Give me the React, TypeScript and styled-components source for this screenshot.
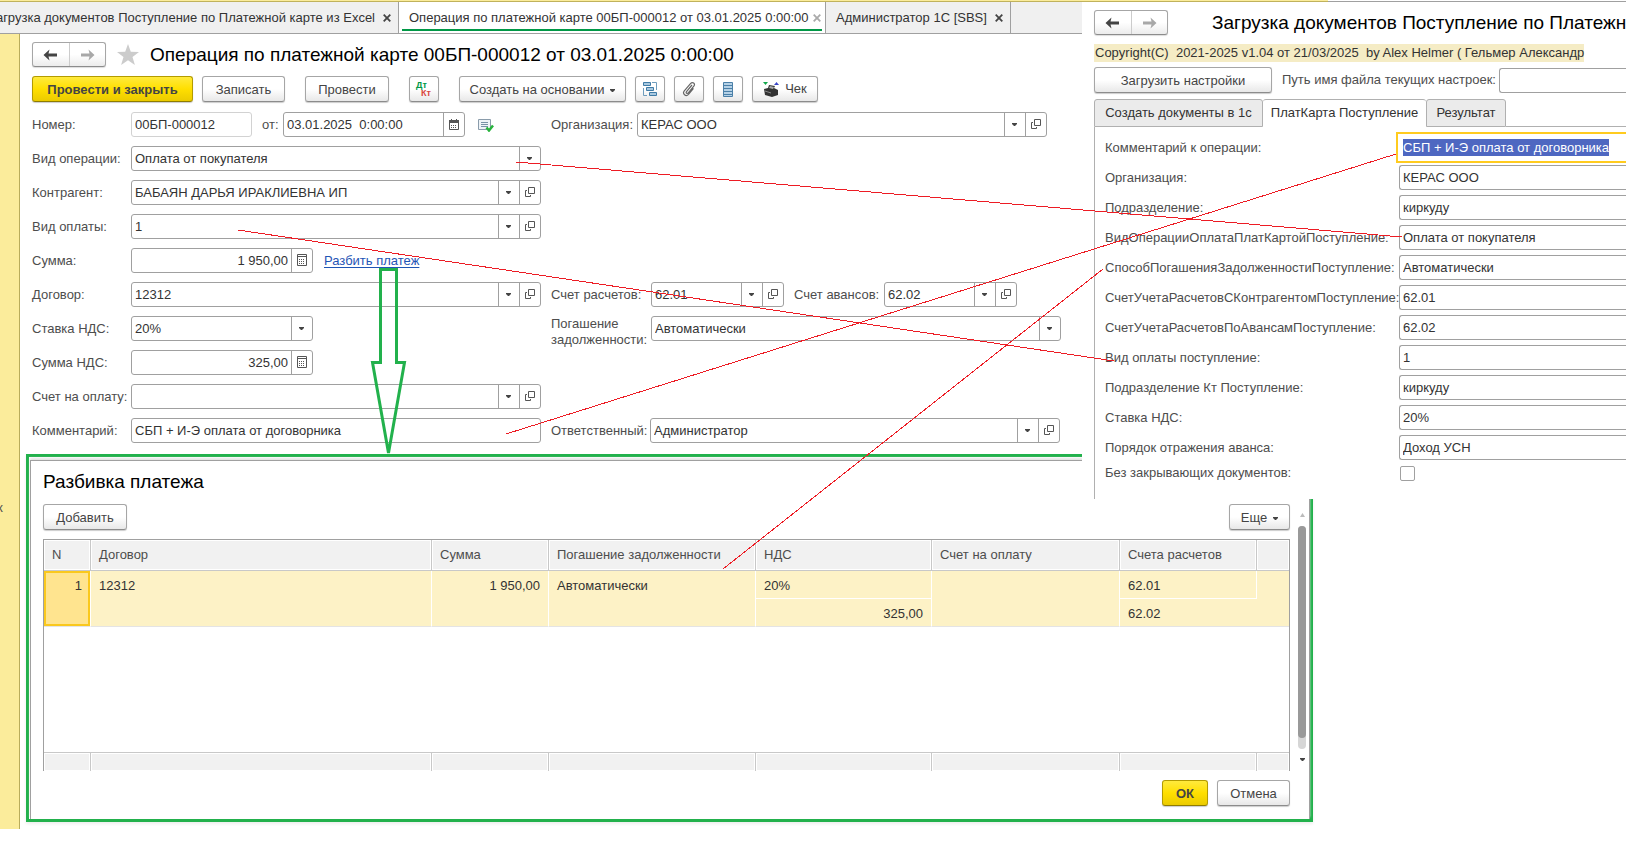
import React from "react";
import styled, { createGlobalStyle, css } from "styled-components";

const GlobalStyle = createGlobalStyle`
  * { box-sizing: border-box; }
  html, body { margin: 0; background: #fff; overflow: hidden; }
  body, input, select, button { font: 13px/16px "Liberation Sans", Arial, sans-serif; }
  body { color: #4d4d4d; }
`;

const Desktop = styled.div`
  position: relative;
  min-height: 100vh;
  overflow: hidden;
`;

/* ---------- base window ---------- */
const BaseWindow = styled.main`
  display: flex;
  flex-direction: column;
  min-height: calc(100vh - 15px);
`;
const TopStrip = styled.div`
  display: grid;
  grid-template-columns: 1328fr 298fr;
  height: 2px;
`;
const StripPart = styled.div<{ $yellow?: boolean }>`
  background: ${(p) => (p.$yellow ? "#fbec9b" : "#fff")};
  border-bottom: 1px solid ${(p) => (p.$yellow ? "#c0b25c" : "#a0a0a0")};
`;
const TabBar = styled.nav`
  display: flex;
  height: 32px;
  background: #f0f0f0;
  border-bottom: 1px solid #a0a0a0;
`;
const WindowTab = styled.div<{ $width: number; $active?: boolean; $end?: boolean }>`
  display: flex;
  flex: none;
  align-items: center;
  justify-content: ${(p) => (p.$end ? "flex-end" : "space-between")};
  gap: ${(p) => (p.$active ? 4 : 8)}px;
  width: ${(p) => p.$width}px;
  padding: 0 ${(p) => (p.$active ? 4 : 7)}px 0 10px;
  border-right: 1px solid #a0a0a0;
  color: #333;
  white-space: nowrap;
  background: ${(p) => (p.$active ? "linear-gradient(#009846, #009846) 3px 27px / calc(100% - 6px) 2px no-repeat #fff" : "transparent")};
`;
const CloseButton = styled.button<{ $dim?: boolean }>`
  display: flex;
  padding: 0;
  border: 0;
  background: none;
  color: ${(p) => (p.$dim ? "#aaa" : "#444")};
`;
const Body = styled.div`
  display: flex;
  flex: 1;
`;
const Sidebar = styled.aside`
  display: flex;
  align-items: center;
  flex: none;
  width: 20px;
  padding-top: 152px;
  background: #fbec9b;
  border-right: 1px solid #b9ac5b;
  overflow: hidden;
`;
const SidebarText = styled.span`
  margin-left: -3px;
`;
const Form = styled.form`
  display: flex;
  flex-direction: column;
  padding: 8px 12px;
`;
const TitleRow = styled.div`
  display: flex;
  align-items: center;
  gap: 10px;
  height: 25px;
`;
const Title = styled.h1`
  margin: 0;
  font-size: 19px;
  font-weight: 400;
  line-height: 24px;
  color: #000;
  white-space: nowrap;
`;

/* ---------- buttons ---------- */
const NavGroup = styled.div`
  display: flex;
  flex: none;
  width: 74px;
  height: 25px;
  border: 1px solid #a6a6a6;
  border-bottom-color: #8c8c8c;
  border-radius: 3px;
  background: linear-gradient(#fff 50%, #ececec);
  box-shadow: 0 1px 1px #ddd;
`;
const NavButton = styled.button`
  display: flex;
  flex: 1;
  align-items: center;
  justify-content: center;
  padding: 0;
  border: 0;
  background: none;
  & + & { border-left: 1px solid #ccc; }
`;
const Button = styled.button<{ $width: number; $primary?: boolean }>`
  display: flex;
  flex: none;
  align-items: center;
  justify-content: center;
  gap: 6px;
  width: ${(p) => p.$width}px;
  height: 26px;
  padding: 2px 0 0;
  border: 1px solid #a6a6a6;
  border-bottom-color: #8c8c8c;
  border-radius: 3px;
  background: linear-gradient(#fff 50%, #e8e8e8);
  box-shadow: 0 1px 1px #ccc;
  color: #444;
  white-space: nowrap;
  ${(p) =>
    p.$primary &&
    css`
      border-color: #b39b00;
      border-bottom-color: #8f7c00;
      background: linear-gradient(#ffea3d, #ffdf00 50%, #ebcb00);
      font-weight: 700;
    `}
`;
const IconButton = styled(Button)`
  padding: 0;
`;
const Toolbar = styled.div`
  display: flex;
  gap: 9px;
  margin: 9px 0 10px;
`;
const ToolGroup = styled.div`
  display: flex;
  gap: 9px;
  & + & { margin-left: 11px; }
`;

/* ---------- form ---------- */
const Fields = styled.div`
  display: grid;
  grid-template-columns: 509px auto;
  column-gap: 10px;
  row-gap: 9px;
`;
const Cell = styled.div`
  display: flex;
  align-items: center;
  height: 25px;
`;
const Label = styled.label<{ $width?: number; $indent?: number }>`
  flex: none;
  width: ${(p) => (p.$width ? p.$width + "px" : "auto")};
  padding-left: ${(p) => p.$indent ?? 0}px;
  white-space: nowrap;
`;
const WrapLabel = styled(Label)`
  align-self: flex-start;
  white-space: normal;
`;
const FieldBox = styled.div<{ $width?: number; $readonly?: boolean }>`
  display: flex;
  flex: ${(p) => (p.$width ? "none" : "1")};
  width: ${(p) => (p.$width ? p.$width + "px" : "auto")};
  min-width: 0;
  height: 25px;
  border: 1px solid ${(p) => (p.$readonly ? "#d2d2d2" : "#a0a0a0")};
  border-radius: 3px;
  background: #fff;
`;
const valueStyle = css`
  flex: 1;
  min-width: 0;
  padding: 0 3px;
  border: 0;
  outline: 0;
  background: none;
  color: #333;
`;
const TextInput = styled.input<{ $right?: boolean }>`
  ${valueStyle}
  text-align: ${(p) => (p.$right ? "right" : "left")};
`;
const Select = styled.select`
  ${valueStyle}
  appearance: none;
`;
const FieldButton = styled.button`
  display: flex;
  flex: none;
  align-items: center;
  justify-content: center;
  width: 21px;
  padding: 0 1px 1px 0;
  border: 0;
  border-left: 1px solid #a0a0a0;
  background: none;
`;
const Link = styled.a`
  margin-left: 11px;
  color: #1f55b5;
  text-underline-offset: 2px;
`;
const StateMark = styled.span`
  display: flex;
  margin-left: 13px;
  padding-top: 2px;
`;

/* ---------- loader window ---------- */
const LoaderWindow = styled.section`
  position: absolute;
  top: 2px;
  left: 1082px;
  right: 0;
  height: 497px;
  display: flex;
  flex-direction: column;
  padding: 8px 0 0 12px;
  background: #fff;
  overflow: hidden;
`;
const LoaderHead = styled.div`
  display: flex;
  align-items: center;
  gap: 44px;
  height: 25px;
`;
const Copyright = styled.p`
  width: 490px;
  height: 18px;
  margin: 9px 0 5px;
  padding: 1px;
  background: #f5ecc5;
  color: #333;
  white-space: pre;
`;
const SettingsRow = styled.div`
  display: flex;
  align-items: center;
  gap: 10px;
`;
const OpenBox = styled(FieldBox)`
  border-right: 0;
  border-radius: 3px 0 0 3px;
`;
const PageTabs = styled.div`
  display: flex;
  flex: none;
  height: 28px;
  margin-top: 6px;
  &::after { content: ""; flex: 1; border-bottom: 1px solid #b0b0b0; }
`;
const PageTab = styled.button<{ $active?: boolean; $width: number }>`
  width: ${(p) => p.$width}px;
  padding: 0;
  border: 1px solid #b0b0b0;
  border-left-width: ${(p) => (p.$active ? 0 : 1)}px;
  border-right-width: ${(p) => (p.$active ? 0 : 1)}px;
  border-bottom-color: ${(p) => (p.$active ? "#fff" : "#b0b0b0")};
  border-radius: 3px 3px 0 0;
  background: ${(p) => (p.$active ? "#fff" : "#ebebeb")};
  color: #333;
  white-space: nowrap;
`;
const PagePanel = styled.div`
  display: flex;
  flex: 1;
  flex-direction: column;
  gap: 5px;
  padding: 8px 0 0 10px;
  border-left: 1px solid #b0b0b0;
`;
const PanelRow = styled.div`
  display: grid;
  grid-template-columns: 294px 1fr;
  align-items: center;
  min-height: 25px;
`;
const FocusBox = styled.div`
  display: flex;
  align-items: center;
  height: 31px;
  margin: -3px 0 -3px -3px;
  padding-left: 5px;
  border: 2px solid #ffcb1f;
  border-right: 0;
`;
const SelectedInput = styled.input`
  field-sizing: content;
  height: 17px;
  padding: 0;
  border: 0;
  outline: 0;
  background: #4e67c1;
  color: #fff;
`;
const CheckRow = styled(PanelRow)`
  min-height: 15px;
`;
const Checkbox = styled.input`
  appearance: none;
  width: 15px;
  height: 15px;
  margin: 0 0 0 1px;
  border: 1px solid #a0a0a0;
  border-radius: 2px;
  background: #fff;
`;

/* ---------- payment split window ---------- */
const SplitWindow = styled.section`
  position: absolute;
  top: 454px;
  left: 26px;
  width: 1287px;
  display: flex;
  border: 3px solid #22b14c;
  background: #fff;
  box-shadow: 0 2px 3px #eee;
`;
const SplitInner = styled.div`
  display: flex;
  flex: 1;
  gap: 8px;
  margin: 3px 0 0 1px;
  padding: 9px 3px 13px 12px;
  border: 1px solid #a0a0a0;
  border-bottom: 0;
  box-shadow: 0 -2px 2px #e4e4e4;
`;
const SplitContent = styled.div`
  display: flex;
  flex: 1;
  flex-direction: column;
`;
const SplitBar = styled.div`
  display: flex;
  justify-content: space-between;
  margin: 10px 0 9px;
`;
const GridFrame = styled.div`
  display: flex;
  flex-direction: column;
  height: 232px;
  border: 1px solid #a0a0a0;
  border-bottom: 0;
`;
const Table = styled.table`
  width: 100%;
  height: 100%;
  table-layout: fixed;
  border-collapse: separate;
  border-spacing: 0;
`;
const headCell = css`
  border-right: 1px solid #c8c8c8;
  background: #f1f1f1;
  box-shadow: inset 0 0 0 1px #fff;
  &:last-child { border-right: 0; }
`;
const Th = styled.th`
  ${headCell}
  height: 31px;
  padding: 0 8px;
  border-bottom: 1px solid #c8c8c8;
  font-weight: 400;
  text-align: left;
`;
const Td = styled.td<{ $right?: boolean; $current?: boolean; $rowEnd?: boolean }>`
  height: 28px;
  padding: 7px 8px 4px;
  border-right: 1px solid #fff;
  border-bottom: 1px solid ${(p) => (p.$rowEnd ? "#e4e4e4" : "#fff")};
  background: ${(p) => (p.$current ? "#ffe48f" : "#fdf2c6")};
  box-shadow: ${(p) => (p.$current ? "inset 0 0 0 2px #fac81e" : "none")};
  color: #333;
  text-align: ${(p) => (p.$right ? "right" : "left")};
  vertical-align: top;
  &:last-child { border-right: 0; }
`;
const EmptyTd = styled.td`
  padding: 0;
`;
const FootTd = styled.td`
  ${headCell}
  height: 19px;
  padding: 0;
  border-top: 1px solid #c8c8c8;
`;
const Actions = styled.div`
  display: flex;
  justify-content: flex-end;
  gap: 9px;
  margin-top: 9px;
`;
const ScrollBar = styled.div`
  display: flex;
  flex-direction: column;
  align-items: center;
  width: 8px;
  height: 248px;
  margin-top: 43px;
`;
const Track = styled.div`
  flex: 1;
  width: 8px;
  margin: 9px 0;
  border-radius: 4px;
  background: #d6d6d6;
`;
const Thumb = styled.div`
  height: 95%;
  border-radius: 4px;
  background: #999;
`;
const Annotations = styled.svg`
  position: absolute;
  top: 0;
  left: 0;
  pointer-events: none;
`;

/* ---------- icons ---------- */
const Cross = () => (
  <svg width="8" height="8" viewBox="0 0 8 8" stroke="currentColor" strokeWidth="1.800">
    <path d="M.7 .7l6.600 6.600M7.300 .7L.7 7.300" />
  </svg>
);
const Arrow = ({ right }: { right?: boolean }) => (
  <svg width="15" height="12" viewBox="0 0 15 12" fill={right ? "#a8a8a8" : "#444"}>
    <path d={right ? "M14.500 6L8.500 .5l1 4H1v3h8.500l-1 4z" : "M.5 6L6.500 .5l-1 4H14v3H5.500l1 4z"} />
  </svg>
);
const Star = () => (
  <svg width="24" height="24" viewBox="0 0 24 24" fill="#ccc">
    <path d="M12 1l2.800 7.800 8.200.2-6.500 5 2.400 8L12 17.200 5.100 22l2.400-8L1 9l8.200-.2z" />
  </svg>
);
const Caret = () => (
  <svg width="5" height="3" viewBox="0 0 5 3" fill="#444">
    <path d="M0 0h5v1L3 3H2L0 1z" />
  </svg>
);
const OpenIcon = () => (
  <svg width="10" height="10" viewBox="0 0 10 10" fill="none" stroke="#555">
    <path d="M3.500 .5h6v6h-6zM2 3.500H.5v6h5V8" />
  </svg>
);
const CalcIcon = () => (
  <svg width="10" height="12" viewBox="0 0 10 12" fill="none" stroke="#555">
    <path d="M.5 .5h9v11h-9zM0 2.500h10" />
    <path d="M2 5.500h6M2 7.500h6M2 9.500h6" strokeDasharray="1 1" />
  </svg>
);
const CalendarIcon = () => (
  <svg width="10" height="11" viewBox="0 0 10 11" fill="none" stroke="#555">
    <path d="M.5 2.500h9v8h-9z" />
    <path d="M0 2.500h10" strokeWidth="3" />
    <path d="M2.500 0v2M7.500 0v2" />
    <path d="M2 6.500h6M2 8.500h6" strokeDasharray="1 1" />
  </svg>
);
const PostedIcon = () => (
  <svg width="16" height="13" viewBox="0 0 16 13" fill="none">
    <path d="M.5 .5h12v10H.5z" stroke="#8a9cab" fill="#eef3f7" />
    <path d="M3 3.500h7M3 5.500h7M3 7.500h7" stroke="#7791a6" />
    <path d="M8.500 8.500l2.500 3 4-5" stroke="#27b33c" strokeWidth="2.500" />
  </svg>
);
const DtKt = styled.span`
  display: grid;
  grid-template: 8px 8px / 5px 11px;
  font: 700 9px/8px "Liberation Sans", Arial, sans-serif;
  text-align: left;
  color: #009846;
`;
const Kt = styled.span`
  grid-area: 2 / 2;
  color: #d9473f;
`;
const StructureIcon = () => (
  <svg width="16" height="16" viewBox="0 0 16 16" fill="#a9c9e0" stroke="#3f7ba6">
    <path d="M1.500 1.500h7v3h-7zM4.500 6.500h7v3h-7zM7.500 11.500h7v3h-7z" />
    <path d="M10 1.500h4.500V9M1.500 7v7.500H5" fill="none" stroke="#6f9dbd" />
  </svg>
);
const ClipIcon = () => (
  <svg width="14" height="16" viewBox="0 0 14 16" fill="none" stroke="#666" strokeWidth="1.200">
    <path d="M10 4L4.500 10.500c-1 1.400.8 2.600 1.800 1.400L12 5c1.500-2.200-1.400-4.700-3.300-2.600L2.300 9.800c-2.300 3 1.600 6.400 4.200 3.500l5-6" />
  </svg>
);
const ListIcon = () => (
  <svg width="10" height="15" viewBox="0 0 10 15" fill="#b5d1e6" stroke="#4b80a8">
    <path d="M.5 .5h9v14h-9zM.5 3.500h9M.5 6.500h9M.5 9.500h9M.5 12.500h9" />
  </svg>
);
const CashIcon = () => (
  <svg width="16" height="16" viewBox="0 0 16 16">
    <path d="M0 1h5L2.500 4z" fill="#12a84b" />
    <path d="M11 4h5l-2.500-3z" fill="#3a46c8" />
    <path d="M1 8l4-1 1-3 6 1-1 2 4 2v5l-6 2-7-2z" fill="#333" />
    <path d="M7 5l4 1-1 2-4-1z" fill="#aaa" />
    <path d="M2 10l6 2" stroke="#888" />
  </svg>
);

const Lookup = ({ id, value, width, open = true }: { id: string; value: string; width?: number; open?: boolean }) => (
  <FieldBox $width={width}>
    {open ? (
      <TextInput id={id} defaultValue={value} />
    ) : (
      <Select id={id} defaultValue={value}>
        <option>{value}</option>
      </Select>
    )}
    <FieldButton type="button" aria-label="Выбрать"><Caret /></FieldButton>
    {open && <FieldButton type="button" aria-label="Открыть"><OpenIcon /></FieldButton>}
  </FieldBox>
);
const Amount = ({ id, value }: { id: string; value: string }) => (
  <FieldBox $width={182}>
    <TextInput id={id} defaultValue={value} $right />
    <FieldButton type="button" aria-label="Калькулятор"><CalcIcon /></FieldButton>
  </FieldBox>
);
const Navigation = () => (
  <NavGroup>
    <NavButton type="button" aria-label="Назад"><Arrow /></NavButton>
    <NavButton type="button" aria-label="Вперед"><Arrow right /></NavButton>
  </NavGroup>
);

const settings = [
  ["Организация:", "КЕРАС ООО"],
  ["Подразделение:", "киркуду"],
  ["ВидОперацииОплатаПлатКартойПоступление:", "Оплата от покупателя"],
  ["СпособПогашенияЗадолженностиПоступление:", "Автоматически"],
  ["СчетУчетаРасчетовСКонтрагентомПоступление:", "62.01"],
  ["СчетУчетаРасчетовПоАвансамПоступление:", "62.02"],
  ["Вид оплаты поступление:", "1"],
  ["Подразделение Кт Поступление:", "киркуду"],
  ["Ставка НДС:", "20%"],
  ["Порядок отражения аванса:", "Доход УСН"],
];
const columns: [string, number | undefined][] = [
  ["N", 47], ["Договор", 341], ["Сумма", 117], ["Погашение задолженности", 207],
  ["НДС", 176], ["Счет на оплату", 188], ["Счета расчетов", 137], ["", undefined],
];

export default function App() {
  return (
    <Desktop>
      <GlobalStyle />
      <BaseWindow>
        <TopStrip><StripPart $yellow /><StripPart /></TopStrip>
        <TabBar>
          <WindowTab $width={399} $end>
            Загрузка документов Поступление по Платежной карте из Excel
            <CloseButton aria-label="Закрыть"><Cross /></CloseButton>
          </WindowTab>
          <WindowTab $width={427} $active>
            Операция по платежной карте 00БП-000012 от 03.01.2025 0:00:00
            <CloseButton $dim aria-label="Закрыть"><Cross /></CloseButton>
          </WindowTab>
          <WindowTab $width={185}>
            Администратор 1С [SBS]
            <CloseButton aria-label="Закрыть"><Cross /></CloseButton>
          </WindowTab>
        </TabBar>
        <Body>
          <Sidebar><SidebarText>к</SidebarText></Sidebar>
          <Form>
            <TitleRow>
              <Navigation />
              <Star />
              <Title>Операция по платежной карте 00БП-000012 от 03.01.2025 0:00:00</Title>
            </TitleRow>
            <Toolbar>
              <ToolGroup>
                <Button type="button" $primary $width={161}>Провести и закрыть</Button>
                <Button type="button" $width={83}>Записать</Button>
              </ToolGroup>
              <ToolGroup><Button type="button" $width={84}>Провести</Button></ToolGroup>
              <ToolGroup>
                <IconButton type="button" $width={30}><DtKt>Дт<Kt>Кт</Kt></DtKt></IconButton>
              </ToolGroup>
              <ToolGroup>
                <Button type="button" $width={167}>Создать на основании <Caret /></Button>
                <IconButton type="button" $width={30} aria-label="Структура"><StructureIcon /></IconButton>
                <IconButton type="button" $width={30} aria-label="Файлы"><ClipIcon /></IconButton>
                <IconButton type="button" $width={30} aria-label="Реестр"><ListIcon /></IconButton>
                <IconButton type="button" $width={66}><CashIcon />Чек</IconButton>
              </ToolGroup>
            </Toolbar>
            <Fields>
              <Cell>
                <Label htmlFor="number" $width={99}>Номер:</Label>
                <FieldBox $width={121} $readonly><TextInput id="number" readOnly value="00БП-000012" /></FieldBox>
                <Label htmlFor="date" $width={31} $indent={10}>от:</Label>
                <FieldBox $width={182}>
                  <TextInput id="date" defaultValue="03.01.2025  0:00:00" />
                  <FieldButton type="button" aria-label="Календарь"><CalendarIcon /></FieldButton>
                </FieldBox>
                <StateMark><PostedIcon /></StateMark>
              </Cell>
              <Cell>
                <Label htmlFor="org" $width={86}>Организация:</Label>
                <Lookup id="org" value="КЕРАС ООО" width={410} />
              </Cell>
              <Cell>
                <Label htmlFor="kind" $width={99}>Вид операции:</Label>
                <Lookup id="kind" value="Оплата от покупателя" open={false} />
              </Cell>
              <Cell />
              <Cell>
                <Label htmlFor="partner" $width={99}>Контрагент:</Label>
                <Lookup id="partner" value="БАБАЯН ДАРЬЯ ИРАКЛИЕВНА ИП" />
              </Cell>
              <Cell />
              <Cell>
                <Label htmlFor="paytype" $width={99}>Вид оплаты:</Label>
                <Lookup id="paytype" value="1" />
              </Cell>
              <Cell />
              <Cell>
                <Label htmlFor="sum" $width={99}>Сумма:</Label>
                <Amount id="sum" value="1 950,00" />
                <Link href="#split">Разбить платеж</Link>
              </Cell>
              <Cell />
              <Cell>
                <Label htmlFor="contract" $width={99}>Договор:</Label>
                <Lookup id="contract" value="12312" />
              </Cell>
              <Cell>
                <Label htmlFor="acc1" $width={100}>Счет расчетов:</Label>
                <Lookup id="acc1" value="62.01" width={133} />
                <Label htmlFor="acc2" $width={100} $indent={10}>Счет авансов:</Label>
                <Lookup id="acc2" value="62.02" width={133} />
              </Cell>
              <Cell>
                <Label htmlFor="vat" $width={99}>Ставка НДС:</Label>
                <Lookup id="vat" value="20%" width={182} open={false} />
              </Cell>
              <Cell>
                <WrapLabel htmlFor="debt" $width={100}>Погашение задолженности:</WrapLabel>
                <Lookup id="debt" value="Автоматически" width={410} open={false} />
              </Cell>
              <Cell>
                <Label htmlFor="vatsum" $width={99}>Сумма НДС:</Label>
                <Amount id="vatsum" value="325,00" />
              </Cell>
              <Cell />
              <Cell>
                <Label htmlFor="invoice" $width={99}>Счет на оплату:</Label>
                <Lookup id="invoice" value="" />
              </Cell>
              <Cell />
              <Cell>
                <Label htmlFor="comment" $width={99}>Комментарий:</Label>
                <FieldBox><TextInput id="comment" defaultValue="СБП + И-Э оплата от договорника" /></FieldBox>
              </Cell>
              <Cell>
                <Label htmlFor="owner" $width={99}>Ответственный:</Label>
                <Lookup id="owner" value="Администратор" width={410} />
              </Cell>
            </Fields>
          </Form>
        </Body>
      </BaseWindow>

      <SplitWindow id="split">
        <SplitInner>
          <SplitContent>
            <Title as="h2">Разбивка платежа</Title>
            <SplitBar>
              <Button type="button" $width={84}>Добавить</Button>
              <Button type="button" $width={61}>Еще <Caret /></Button>
            </SplitBar>
            <GridFrame>
              <Table>
                <colgroup>
                  {columns.map(([name, width]) => <col key={name} width={width} />)}
                </colgroup>
                <thead>
                  <tr>{columns.map(([name]) => <Th key={name}>{name}</Th>)}</tr>
                </thead>
                <tbody>
                  <tr>
                    <Td rowSpan={2} $right $current $rowEnd>1</Td>
                    <Td rowSpan={2} $rowEnd>12312</Td>
                    <Td rowSpan={2} $right $rowEnd>1 950,00</Td>
                    <Td rowSpan={2} $rowEnd>Автоматически</Td>
                    <Td>20%</Td>
                    <Td rowSpan={2} $rowEnd />
                    <Td>62.01</Td>
                    <Td rowSpan={2} $rowEnd />
                  </tr>
                  <tr>
                    <Td $right $rowEnd>325,00</Td>
                    <Td $rowEnd>62.02</Td>
                  </tr>
                  <tr><EmptyTd colSpan={8} /></tr>
                </tbody>
                <tfoot>
                  <tr>{columns.map(([name]) => <FootTd key={name} />)}</tr>
                </tfoot>
              </Table>
            </GridFrame>
            <Actions>
              <Button type="button" $primary $width={46}>ОК</Button>
              <Button type="button" $width={73}>Отмена</Button>
            </Actions>
          </SplitContent>
          <ScrollBar>
            <svg width="5" height="4" viewBox="0 0 5 4" fill="#bbb"><path d="M0 4h5L2.500 0z" /></svg>
            <Track><Thumb /></Track>
            <Caret />
          </ScrollBar>
        </SplitInner>
      </SplitWindow>

      <LoaderWindow>
        <LoaderHead>
          <Navigation />
          <Title as="h2">Загрузка документов Поступление по Платежной карте из Excel</Title>
        </LoaderHead>
        <Copyright>Copyright(C)  2021-2025 v1.04 от 21/03/2025  by Alex Helmer ( Гельмер Александр</Copyright>
        <SettingsRow>
          <Button type="button" $width={178}>Загрузить настройки</Button>
          <Label htmlFor="path" $width={207}>Путь имя файла текущих настроек:</Label>
          <OpenBox><TextInput id="path" /></OpenBox>
        </SettingsRow>
        <PageTabs>
          <PageTab type="button" $width={169}>Создать документы в 1с</PageTab>
          <PageTab type="button" $width={163} $active>ПлатКарта Поступление</PageTab>
          <PageTab type="button" $width={80}>Результат</PageTab>
        </PageTabs>
        <PagePanel>
          <PanelRow>
            <Label htmlFor="opcomment">Комментарий к операции:</Label>
            <FocusBox><SelectedInput id="opcomment" defaultValue="СБП + И-Э оплата от договорника" /></FocusBox>
          </PanelRow>
          {settings.map(([name, value], i) => (
            <PanelRow key={name}>
              <Label htmlFor={"setting" + i}>{name}</Label>
              <OpenBox><TextInput id={"setting" + i} defaultValue={value} /></OpenBox>
            </PanelRow>
          ))}
          <CheckRow>
            <Label htmlFor="noclosing">Без закрывающих документов:</Label>
            <Checkbox id="noclosing" type="checkbox" />
          </CheckRow>
        </PagePanel>
      </LoaderWindow>

      <Annotations width="1420" height="580" viewBox="0 0 1420 580" fill="none">
        <g stroke="#ed1c24" shapeRendering="crispEdges">
          <path d="M516 162L1402 237" />
          <path d="M238 230L1114 361" />
          <path d="M506 434L1396 154" />
          <path d="M723 569L1103 269" />
        </g>
        <path d="M380.500 269.500h16v93h8L388.500 453l-16-90.500h8z" stroke="#22b14c" strokeWidth="3" />
      </Annotations>
    </Desktop>
  );
}
